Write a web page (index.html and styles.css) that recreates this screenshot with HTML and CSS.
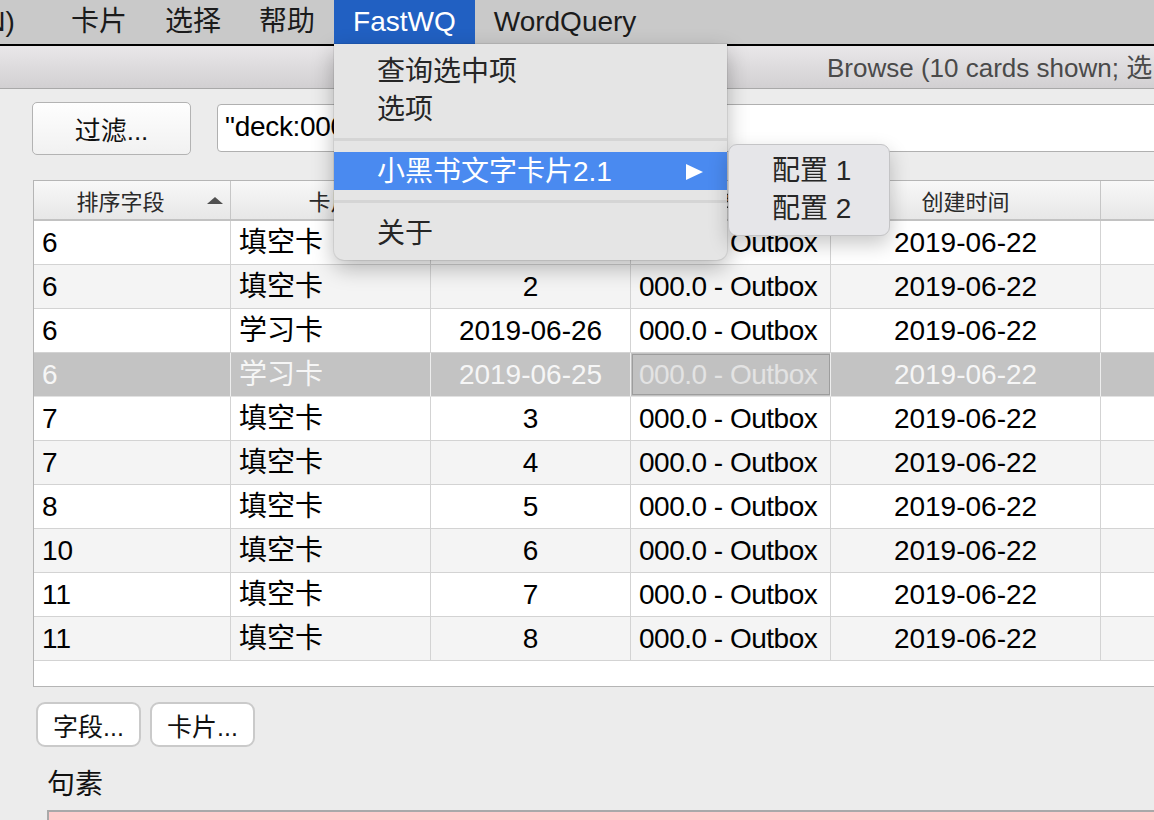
FILE: index.html
```html
<!DOCTYPE html>
<html lang="zh">
<head>
<meta charset="utf-8">
<title>Browse</title>
<link rel="stylesheet" href="styles.css">
</head>
<body>
<div class="menubar">
  <div class="mi clip"><span>(N)</span></div>
  <div class="mi">卡片</div>
  <div class="mi">选择</div>
  <div class="mi">帮助</div>
  <div class="mi active">FastWQ</div>
  <div class="mi">WordQuery</div>
</div>
<div class="edge"></div>
<div class="titlebar">Browse (10 cards shown; 选中 1 张卡片)</div>
<main class="content">
  <div class="filter-row">
    <button class="filter">过滤...</button>
    <div class="search">"deck:000.0 - Outbox"</div>
  </div>
  <div class="table">
    <div class="tr thead">
      <div class="th sort"><span class="th-text">排序字段</span><span class="tri"></span></div>
      <div class="th">卡片</div>
      <div class="th">到期</div>
      <div class="th">牌组</div>
      <div class="th">创建时间</div>
      <div class="th last"></div>
    </div>
    <div class="tr row"><div class="td">6</div><div class="td">填空卡</div><div class="td c">1</div><div class="td deck">000.0 - Outbox</div><div class="td c">2019-06-22</div><div class="td last"></div></div>
    <div class="tr row alt"><div class="td">6</div><div class="td">填空卡</div><div class="td c">2</div><div class="td deck">000.0 - Outbox</div><div class="td c">2019-06-22</div><div class="td last"></div></div>
    <div class="tr row"><div class="td">6</div><div class="td">学习卡</div><div class="td c">2019-06-26</div><div class="td deck">000.0 - Outbox</div><div class="td c">2019-06-22</div><div class="td last"></div></div>
    <div class="tr row sel"><div class="td">6</div><div class="td">学习卡</div><div class="td c">2019-06-25</div><div class="td deck focus">000.0 - Outbox</div><div class="td c">2019-06-22</div><div class="td last"></div></div>
    <div class="tr row"><div class="td">7</div><div class="td">填空卡</div><div class="td c">3</div><div class="td deck">000.0 - Outbox</div><div class="td c">2019-06-22</div><div class="td last"></div></div>
    <div class="tr row alt"><div class="td">7</div><div class="td">填空卡</div><div class="td c">4</div><div class="td deck">000.0 - Outbox</div><div class="td c">2019-06-22</div><div class="td last"></div></div>
    <div class="tr row"><div class="td">8</div><div class="td">填空卡</div><div class="td c">5</div><div class="td deck">000.0 - Outbox</div><div class="td c">2019-06-22</div><div class="td last"></div></div>
    <div class="tr row alt"><div class="td">10</div><div class="td">填空卡</div><div class="td c">6</div><div class="td deck">000.0 - Outbox</div><div class="td c">2019-06-22</div><div class="td last"></div></div>
    <div class="tr row"><div class="td">11</div><div class="td">填空卡</div><div class="td c">7</div><div class="td deck">000.0 - Outbox</div><div class="td c">2019-06-22</div><div class="td last"></div></div>
    <div class="tr row alt"><div class="td">11</div><div class="td">填空卡</div><div class="td c">8</div><div class="td deck">000.0 - Outbox</div><div class="td c">2019-06-22</div><div class="td last"></div></div>
  </div>
  <div class="btn-row">
    <button class="pill">字段...</button>
    <button class="pill">卡片...</button>
  </div>
  <div class="label">句素</div>
  <div class="field"></div>
</main>

<div class="menu">
  <div class="menu-item">查询选中项</div>
  <div class="menu-item">选项</div>
  <div class="sep"></div>
  <div class="menu-item hl"><span>小黑书文字卡片2.1</span><span class="arrow"></span></div>
  <div class="sep"></div>
  <div class="menu-item">关于</div>
</div>
<div class="submenu">
  <div class="menu-item">配置 1</div>
  <div class="menu-item">配置 2</div>
</div>
</body>
</html>
```

FILE: styles.css
```css
* { box-sizing: border-box; }
html, body { margin: 0; padding: 0; }
body {
  width: 1154px;
  height: 820px;
  overflow: hidden;
  position: relative;
  background: #ececec;
  font-family: "Liberation Sans", "Noto Sans CJK SC", sans-serif;
  color: #000;
}

/* menu bar */
.menubar {
  height: 44px;
  background: #c9c9c9;
  display: flex;
  font-size: 28px;
  color: #1b1b1b;
}
.mi { padding: 0 19px; line-height: 44px; white-space: nowrap; }
.mi.clip { width: 52px; padding: 0; overflow: hidden; }
.mi.clip span { display: inline-block; margin-left: -24px; }
.mi.active { background: #2160c2; color: #fff; }
.edge { height: 2px; background: #000; }

/* title bar */
.titlebar {
  height: 43px;
  background: linear-gradient(#e9e7e9, #d2d0d2);
  border-bottom: 1px solid #a9a9a9;
  font-size: 26px;
  color: #4a4a4a;
  line-height: 44px;
  padding-left: 827px;
  white-space: nowrap;
  overflow: hidden;
}

/* content */
.content { padding: 13px 0 0 33px; }
.filter-row {
  display: flex;
  align-items: flex-start;
  gap: 26px;
  height: 53px;
  margin-right: -12px;
}
.filter {
  width: 159px;
  height: 53px;
  margin: 0 0 0 -1px;
  border: 1.5px solid #b3b3b3;
  border-radius: 5px;
  background: linear-gradient(#fefefe, #f1f1f1);
  font-family: inherit;
  font-size: 26px;
  color: #111;
  padding: 0;
}
.search {
  flex: 1;
  height: 48px;
  margin-top: 2px;
  border: 1.5px solid #b0b0b0;
  border-radius: 4px;
  background: #fff;
  font-size: 28px;
  line-height: 44px;
  padding-left: 7px;
  white-space: nowrap;
  overflow: hidden;
  letter-spacing: -0.3px;
}

/* table */
.table {
  margin-top: 25px;
  margin-right: -12px;
  height: 507px;
  border: 1px solid #b5b5b5;
  border-right: none;
  background: #fff;
}
.tr {
  display: grid;
  grid-template-columns: 197px 200px 200px 200px 270px 1fr;
}
.thead {
  height: 40px;
  background: linear-gradient(#f8f8f8, #e7e7e7);
  border-bottom: 2px solid #c2c2c2;
  font-size: 22px;
  color: #2a2a2a;
}
.th {
  border-right: 1px solid #c6c6c6;
  display: flex;
  align-items: center;
  justify-content: center;
  white-space: nowrap;
  overflow: hidden;
}
.th.sort { justify-content: space-between; }
.th-text { flex: 1; text-align: center; }
.tri {
  width: 0;
  height: 0;
  margin-right: 7px;
  border-left: 8px solid transparent;
  border-right: 8px solid transparent;
  border-bottom: 7px solid #505050;
}
.row {
  height: 44px;
  border-bottom: 1px solid #d3d3d3;
  font-size: 28px;
}
.td {
  border-right: 1px solid #d3d3d3;
  line-height: 43px;
  padding: 0 8px;
  white-space: nowrap;
  overflow: hidden;
}
.td.deck { letter-spacing: -0.5px; }
.th.last, .td.last { border-right: none; }
.c { text-align: center; }
.row.alt { background: #f4f4f4; }
.row.sel { background: #c3c3c3; color: #f6f6f6; border-bottom-color: #e2e2e2; }
.row.sel .td { border-right-color: #eeeeee; }
.row.sel .td.focus {
  outline: 1px solid #9d9d9d;
  outline-offset: -2px;
  background: #c1c1c1;
  color: #e3e3e3;
}

/* bottom */
.btn-row { display: flex; gap: 9px; margin: 15px 0 0 3px; }
.pill {
  width: 105px;
  height: 45px;
  border: 2px solid #cacaca;
  border-radius: 9px;
  background: #fff;
  font-family: inherit;
  font-size: 25px;
  color: #111;
  padding: 0;
}
.label { margin: 20px 0 0 14px; font-size: 28px; line-height: 36px; color: #111; }
.field {
  margin: 7px -12px 0 14px;
  height: 40px;
  background: #ffcccc;
  border-top: 2px solid #a9a9a9;
  border-left: 2px solid #a9a9a9;
}

/* dropdown menu */
.menu {
  position: absolute;
  left: 334px;
  top: 44px;
  width: 393px;
  height: 216px;
  padding-top: 8px;
  background: #e5e5e5;
  border-radius: 0 0 10px 10px;
  box-shadow: 0 8px 22px rgba(0,0,0,.28), 0 0 0 1px rgba(0,0,0,.07);
  font-size: 28px;
  color: #262626;
}
.menu-item {
  height: 38px;
  line-height: 36px;
  padding: 2px 24px 0 43px;
  display: flex;
  justify-content: space-between;
  align-items: center;
  white-space: nowrap;
}
.menu-item.hl { background: #4a8af0; color: #fff; }
.sep { height: 24px; padding-top: 10px; }
.sep::before { content: ""; display: block; height: 3px; background: #d5d5d5; }
.arrow {
  width: 0;
  height: 0;
  border-top: 8.5px solid transparent;
  border-bottom: 8.5px solid transparent;
  border-left: 17px solid #fff;
}
.submenu {
  position: absolute;
  left: 728px;
  top: 144px;
  width: 162px;
  height: 92px;
  padding-top: 6px;
  background: #e6e6e9;
  border: 1px solid #c4c4c6;
  border-radius: 9px;
  box-shadow: 0 8px 20px rgba(0,0,0,.22);
  font-size: 28px;
  color: #262626;
}
```
